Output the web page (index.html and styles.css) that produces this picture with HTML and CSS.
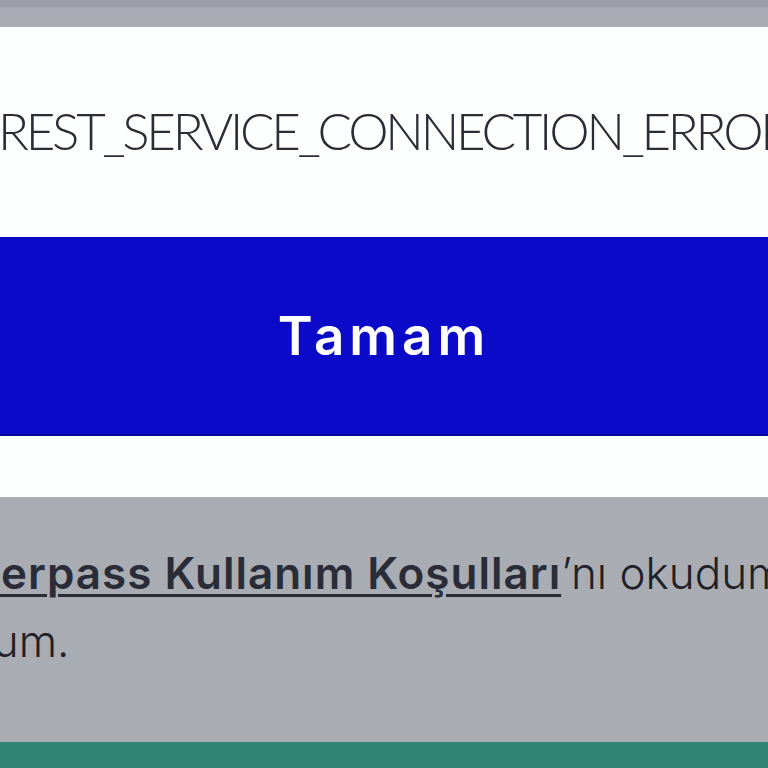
FILE: index.html
```html
<!DOCTYPE html>
<html lang="tr">
<head>
<meta charset="utf-8">
<title>Hata</title>
<link rel="stylesheet" href="styles.css">
</head>
<body>
<div class="page">
  <div class="topbar"></div>
  <div class="modal">
    <div class="message"><span class="msg-text">REST_SERVICE_CONNECTION_ERROR</span></div>
    <button class="ok-btn">Tamam</button>
    <div class="modal-foot"></div>
  </div>
  <div class="terms">
    <p class="terms-text"><span class="line line-1"><a class="terms-link">Superpass Kullanım Koşulları</a>’nı okudum ve kabul</span><span class="line line-2">ediyorum.</span></p>
  </div>
  <div class="footer"></div>
</div>
</body>
</html>
```
FILE: styles.css
```css
html, body {
  margin: 0;
  padding: 0;
  background: #a9acb3;
}
.page {
  width: 768px;
  height: 768px;
  overflow: hidden;
  display: flex;
  flex-direction: column;
  font-family: "Inter", "Liberation Sans", sans-serif;
}
.topbar {
  height: 27px;
  flex: none;
  background: linear-gradient(#9c9ea8 0, #9c9ea8 7px, #a8abb3 8px, #a9acb3 100%);
}
.modal {
  flex: none;
  height: 470px;
  background: #fdfefe;
  display: flex;
  flex-direction: column;
}
.message {
  height: 206px;
  padding: 0 0 4px 18px;
  display: flex;
  align-items: center;
  justify-content: center;
  overflow: hidden;
}
.msg-text {
  white-space: nowrap;
  font-family: "Lato", "Inter", sans-serif;
  font-size: 51px;
  font-weight: 300;
  color: #2b2d35;
  letter-spacing: -3.2px;
}
.ok-btn {
  height: 199px;
  border: 0;
  margin: 0;
  padding: 0;
  background: #0a0ac8;
  border-bottom: 2px solid #08089e;
  color: #ffffff;
  font-family: inherit;
  font-size: 53px;
  font-weight: 600;
  letter-spacing: 5px;
}
.modal-foot {
  flex: 1;
}
.terms {
  flex: none;
  height: 245px;
  background: #a9acb3;
  overflow: hidden;
}
.terms-text {
  margin: 42px 0 0 0;
  font-size: 44px;
  font-weight: 300;
  line-height: 68px;
  color: #1f2129;
}
.line {
  display: block;
  white-space: nowrap;
}
.line-1 {
  margin-left: -85px;
}
.line-2 {
  margin-left: -135px;
}
.terms-link {
  font-weight: 600;
  letter-spacing: 1px;
  text-decoration: underline;
  text-decoration-thickness: 3px;
  text-underline-offset: 5px;
  color: #2a2d38;
}
.footer {
  flex: 1;
  background: #308575;
}
```
